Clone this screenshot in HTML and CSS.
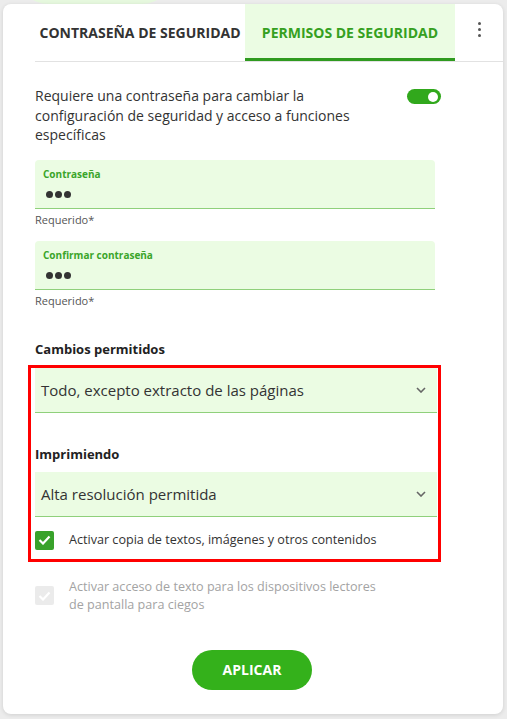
FILE: index.html
```html
<!DOCTYPE html>
<html lang="es">
<head>
    <meta charset="UTF-8">
    <meta name="viewport" content="width=device-width, initial-scale=1.0">
    <title>Permisos de seguridad</title>
    <link rel="stylesheet" href="styles.css">
</head>
<body>
    <div class="backdrop-blob"></div>
    <div class="dialog">
        <div class="tabs">
            <div class="tab">CONTRASEÑA DE SEGURIDAD</div>
            <div class="tab active">PERMISOS DE SEGURIDAD</div>
            <div class="kebab"><span></span><span></span><span></span></div>
        </div>

        <div class="content">
            <div class="toggle-row">
                <p>Requiere una contraseña para cambiar la configuración de seguridad y acceso a funciones específicas</p>
                <div class="toggle"><span></span></div>
            </div>

            <div class="field first">
                <label>Contraseña</label>
                <div class="dots"><span></span><span></span><span></span></div>
            </div>
            <div class="hint">Requerido*</div>

            <div class="field">
                <label>Confirmar contraseña</label>
                <div class="dots"><span></span><span></span><span></span></div>
            </div>
            <div class="hint">Requerido*</div>

            <h4 class="section">Cambios permitidos</h4>

            <div class="highlight">
                <div class="select">
                    <span>Todo, excepto extracto de las páginas</span>
                    <svg width="10" height="6" viewBox="0 0 10 6"><path d="M1 1l4 4 4-4" fill="none" stroke="#666" stroke-width="1.6"/></svg>
                </div>

                <h4 class="section inner">Imprimiendo</h4>

                <div class="select">
                    <span>Alta resolución permitida</span>
                    <svg width="10" height="6" viewBox="0 0 10 6"><path d="M1 1l4 4 4-4" fill="none" stroke="#666" stroke-width="1.6"/></svg>
                </div>

                <div class="check-row">
                    <div class="checkbox">
                        <svg width="13" height="10" viewBox="0 0 13 10"><path d="M1.5 5l3.5 3.5 6.5-7" fill="none" stroke="#fff" stroke-width="2.2"/></svg>
                    </div>
                    <span>Activar copia de textos, imágenes y otros contenidos</span>
                </div>
            </div>

            <div class="check-row disabled">
                <div class="checkbox">
                    <svg width="13" height="10" viewBox="0 0 13 10"><path d="M1.5 5l3.5 3.5 6.5-7" fill="none" stroke="#fff" stroke-width="2.2"/></svg>
                </div>
                <span>Activar acceso de texto para los dispositivos lectores<br>de pantalla para ciegos</span>
            </div>

            <div class="actions">
                <button>APLICAR</button>
            </div>
        </div>
    </div>
</body>
</html>
```

FILE: styles.css
```css
body {
    margin: 0;
    background: #ececec;
    font-family: "Open Sans", "Noto Sans", sans-serif;
    color: #333;
    position: relative;
    height: 719px;
    overflow: hidden;
}
.backdrop-blob {
    position: absolute;
    left: 15px;
    top: -30px;
    width: 160px;
    height: 34px;
    border-radius: 0 0 40px 40px;
    background: #e6f8de;
}
.dialog {
    position: relative;
    margin: 4px 4px 0 3px;
    height: 710px;
    background: #fff;
    border-radius: 8px;
    box-shadow: 0 1px 4px rgba(0, 0, 0, 0.12);
}
.tabs {
    display: flex;
    margin-left: 32px;
    border-bottom: 1px solid #e2e2e2;
    height: 57px;
}
.tab {
    width: 210px;
    display: flex;
    align-items: center;
    justify-content: center;
    font-size: 14px;
    font-weight: 700;
    color: #333;
    border-bottom: 3px solid transparent;
    padding-top: 3px;
}
.tab.active {
    background: #ebfce3;
    color: #35a021;
    border-bottom-color: #2f9a1f;
}
.kebab {
    flex: 1;
    display: flex;
    flex-direction: column;
    align-items: center;
    gap: 3px;
    padding-top: 18px;
}
.kebab span { width: 3px; height: 3px; border-radius: 50%; background: #555; }
.content { padding: 24px 0 0 32px; }
.toggle-row { display: flex; width: 406px; justify-content: space-between; align-items: flex-start; }
.toggle-row p { margin: 0; width: 340px; font-size: 14px; line-height: 19.5px; color: #333; }
.toggle {
    width: 34px;
    height: 15px;
    border-radius: 8px;
    background: #31a81c;
    margin-top: 3px;
    display: flex;
    justify-content: flex-end;
    align-items: center;
    padding-right: 3px;
    box-sizing: border-box;
}
.toggle span { width: 10px; height: 10px; border-radius: 50%; background: #fff; }
.field {
    margin-top: 13px;
    width: 400px;
    height: 49px;
    box-sizing: border-box;
    background: #ebfce3;
    border-radius: 4px 4px 0 0;
    border-bottom: 1px solid #8fd07b;
    padding: 6px 8px 0;
}
.field.first { margin-top: 15px; }
.field label { display: block; font-size: 10px; font-weight: 700; color: #3aa52a; line-height: 16px; }
.dots { display: flex; gap: 2px; margin: 9px 0 0 3px; }
.dots span { width: 7px; height: 7px; border-radius: 50%; background: #333; }
.hint { font-size: 11px; color: #555; line-height: 16px; margin-top: 3px; }
.section { margin: 31px 0 0; font-size: 13px; font-weight: 700; line-height: 18px; color: #222; }
.highlight {
    margin: 7px 0 0 -7px;
    width: 413px;
    box-sizing: border-box;
    border: 3px solid #ff0000;
    padding: 0 1px 9px 4px;
}
.select {
    height: 45px;
    box-sizing: border-box;
    background: #ebfce3;
    border-bottom: 1px solid #8fd07b;
    display: flex;
    align-items: center;
    justify-content: space-between;
    padding: 0 11px 0 6px;
    font-size: 15px;
    color: #333;
}
.section.inner { margin-top: 32px; margin-bottom: 9px; }
.check-row { display: flex; align-items: center; gap: 15px; margin-top: 14px; font-size: 12.6px; line-height: 18px; }
.checkbox {
    width: 19px;
    height: 19px;
    border-radius: 2px;
    background: #38a22a;
    display: flex;
    align-items: center;
    justify-content: center;
    flex-shrink: 0;
}
.check-row.disabled { margin-top: 16px; color: #a3a3a3; }
.check-row.disabled .checkbox { background: #ebebeb; }
.actions { display: flex; justify-content: center; width: 434px; margin-top: 36px; }
button {
    width: 120px;
    height: 40px;
    border: none;
    border-radius: 20px;
    background: #34b11b;
    color: #fff;
    font-family: inherit;
    font-size: 14px;
    font-weight: 700;
    cursor: pointer;
}
```
